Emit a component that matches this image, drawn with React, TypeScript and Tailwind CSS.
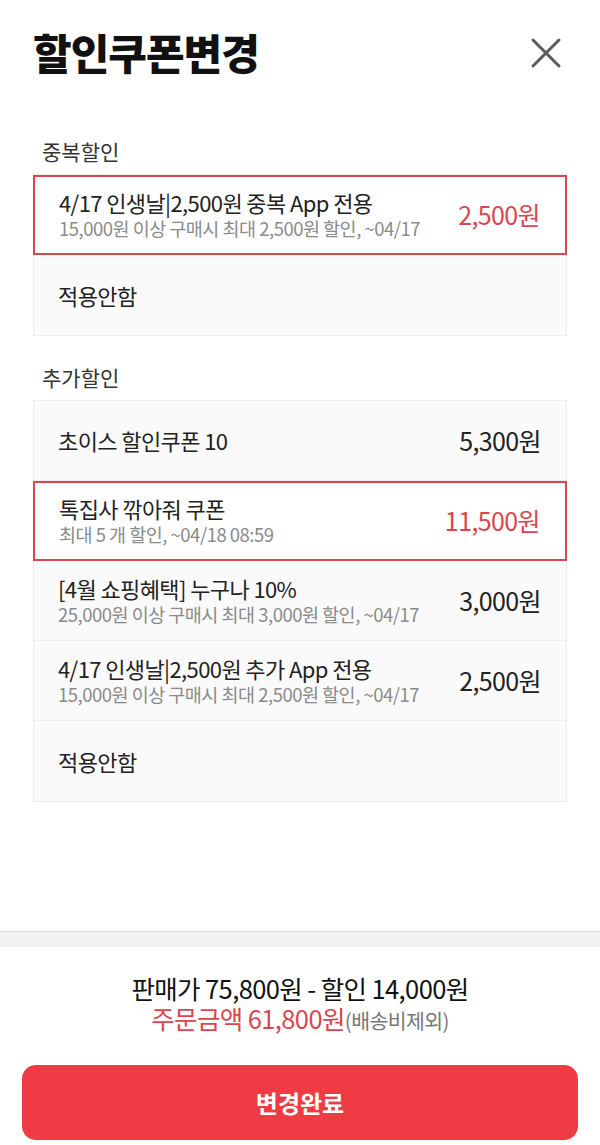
import React from "react"

type Coupon = {
  title: string
  sub?: string
  price?: string
  selected?: boolean
}

const dup: Coupon[] = [
  { title: "4/17 인생날|2,500원 중복 App 전용", sub: "15,000원 이상 구매시 최대 2,500원 할인, ~04/17", price: "2,500원", selected: true },
  { title: "적용안함" },
]

const extra: Coupon[] = [
  { title: "초이스 할인쿠폰 10", price: "5,300원" },
  { title: "톡집사 깎아줘 쿠폰", sub: "최대 5 개 할인, ~04/18 08:59", price: "11,500원", selected: true },
  { title: "[4월 쇼핑혜택] 누구나 10%", sub: "25,000원 이상 구매시 최대 3,000원 할인, ~04/17", price: "3,000원" },
  { title: "4/17 인생날|2,500원 추가 App 전용", sub: "15,000원 이상 구매시 최대 2,500원 할인, ~04/17", price: "2,500원" },
  { title: "적용안함" },
]

const font = { fontFamily: '"Noto Sans CJK KR", "Noto Sans", sans-serif' }

function Row({ c }: { c: Coupon }) {
  return (
    <div
      className={
        "flex h-[80px] items-center justify-between pl-[24px] pr-[25px] " +
        (c.selected
          ? "bg-white border-2 border-[#d9464f] -mx-px"
          : "bg-[#fafafa] border-b border-[#ececec] last:border-b-0")
      }
    >
      <div className="flex flex-col">
        <span className="text-[22px] leading-[27px] text-[#222] tracking-[-0.6px]">{c.title}</span>
        {c.sub && <span className="text-[18.5px] leading-[25px] text-[#8a8a8a] tracking-[-0.5px]">{c.sub}</span>}
      </div>
      {c.price && (
        <span className={"text-[25px] tracking-[-0.6px] " + (c.selected ? "text-[#d9464f]" : "text-[#222]")}>
          {c.price}
        </span>
      )}
    </div>
  )
}

function Section({ label, items }: { label: string; items: Coupon[] }) {
  return (
    <section className="flex flex-col">
      <p className="pl-[9px] text-[21px] leading-[26px] text-[#333] mb-[10px]">{label}</p>
      <div className="flex flex-col border border-[#ececec] bg-[#fafafa]">
        {items.map((c, i) => (
          <Row key={i} c={c} />
        ))}
      </div>
    </section>
  )
}

export default function App() {
  return (
    <div className="flex h-[1145px] w-[600px] flex-col overflow-hidden bg-white" style={font}>
      <header className="flex items-center justify-between pl-[33px] pr-[38px] pt-[24px]">
        <h1 className="text-[42px] font-black leading-[56px] text-[#111] tracking-[-1px]">할인쿠폰변경</h1>
        <svg width="32" height="32" viewBox="0 0 32 32" className="mt-[2px]">
          <path d="M3 3 L29 29 M29 3 L3 29" stroke="#5a5a5a" strokeWidth="3" strokeLinecap="round" />
        </svg>
      </header>

      <main className="flex flex-1 flex-col gap-[28px] px-[33px] pt-[58px]">
        <Section label="중복할인" items={dup} />
        <Section label="추가할인" items={extra} />
      </main>

      <div className="h-[16px] border-t border-[#dcdcdc] bg-[#f2f2f2]" />
      <footer className="flex flex-col items-center px-[22px] pb-[5px] pt-[26px]">
        <p className="text-[25.5px] leading-[30px] text-[#111] tracking-[-0.6px]">판매가 75,800원 - 할인 14,000원</p>
        <p className="leading-[30px] tracking-[-0.6px]">
          <span className="text-[25.5px] text-[#d9464f]">주문금액 61,800원</span>
          <span className="text-[20.5px] text-[#777]">(배송비제외)</span>
        </p>
        <button className="mt-[28px] h-[75px] w-full rounded-[14px] bg-[#ee3b44] text-[24px] font-bold text-white">
          변경완료
        </button>
      </footer>
    </div>
  )
}
